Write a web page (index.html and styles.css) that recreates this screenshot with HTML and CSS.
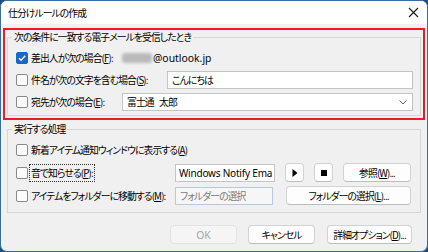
FILE: index.html
```html
<!DOCTYPE html>
<html lang="ja">
<head>
<meta charset="utf-8">
<title>仕分けルールの作成</title>
<link rel="stylesheet" href="styles.css">
</head>
<body>
<div class="window">
	<div class="titlebar">
		<span class="title">仕分けルールの作成</span>
		<svg class="close" width="11" height="11" viewBox="0 0 11 11"><path d="M1 1L10 10M10 1L1 10" stroke="#1a1a1a" stroke-width="1.1"/></svg>
	</div>
	<div class="content">
		<!--条件-->
		<div class="highlight">
			<fieldset class="group">
				<legend>次の条件に一致する電子メールを受信したとき</legend>
				<div class="row">
					<span class="check on"><svg width="10" height="10" viewBox="0 0 10 10"><path d="M2 5.2L4.1 7.3L8.2 2.8" fill="none" stroke="#fff" stroke-width="1.4"/></svg></span>
					<span class="label lbl-a">差出人が次の場合(<u>F</u>):</span>
					<span class="blur"></span><span class="latin">@outlook.jp</span>
				</div>
				<div class="row">
					<span class="check"></span>
					<span class="label lbl-b">件名が次の文字を含む場合(<u>S</u>):</span>
					<span class="field grow">こんにちは</span>
				</div>
				<div class="row">
					<span class="check"></span>
					<span class="label lbl-a">宛先が次の場合(<u>E</u>):</span>
					<span class="field grow combo"><span class="name">富士通 太郎</span><svg width="8" height="5" viewBox="0 0 8 5"><path d="M0.5 0.5L4 4L7.5 0.5" fill="none" stroke="#666" stroke-width="1"/></svg></span>
				</div>
			</fieldset>
		</div>
		<!--処理-->
		<fieldset class="group actions">
			<legend>実行する処理</legend>
			<div class="row">
				<span class="check"></span>
				<span class="label">新着アイテム通知ウィンドウに表示する(<u>A</u>)</span>
			</div>
			<div class="row">
				<span class="check"></span>
				<span class="label lbl-c"><span class="focus">音で知らせる(<u>P</u>):</span></span>
				<span class="field sound latin">Windows Notify Ema</span>
				<span class="btn small"><svg width="6" height="8" viewBox="0 0 6 8"><path d="M0.5 0L5.5 4L0.5 8Z" fill="#000"/></svg></span>
				<span class="btn small"><svg width="6" height="6" viewBox="0 0 6 6"><rect width="6" height="6" fill="#000"/></svg></span>
				<span class="btn browse">参照(<u>W</u>)...</span>
			</div>
			<div class="row">
				<span class="check"></span>
				<span class="label lbl-c">アイテムをフォルダーに移動する(<u>M</u>):</span>
				<span class="field folder">フォルダーの選択</span>
				<span class="btn pick">フォルダーの選択(<u>L</u>)...</span>
			</div>
		</fieldset>
		<div class="footer">
			<span class="btn ok disabled latin">OK</span>
			<span class="btn cancel">キャンセル</span>
			<span class="btn more">詳細オプション(<u>D</u>)...</span>
		</div>
	</div>
</div>
</body>
</html>
```

FILE: styles.css
```css
* {
	margin: 0;
	padding: 0;
	box-sizing: border-box;
}

html,
body {
	width: 428px;
	height: 252px;
	overflow: hidden;
	background: #1f4f80;
}

body {
	font-family: "Noto Sans CJK JP", sans-serif;
	font-size: 9.8px;
	letter-spacing: -0.9px;
	font-feature-settings: "palt";
	color: #000;
}

/* 英字だけは少し大きく */
.latin {
	font-family: "Noto Sans", "Noto Sans CJK JP", sans-serif;
	font-size: 10.4px;
	letter-spacing: 0;
}

.window {
	width: 428px;
	height: 252px;
	border: 1px solid #3a6ca0;
	border-radius: 7px;
	background: #f0f0f0;
	overflow: hidden;
}

.titlebar {
	height: 23px;
	background: #fff;
	display: flex;
	align-items: center;
	justify-content: space-between;
	padding: 0 8px 0 7px;
}

.content {
	padding-top: 4px;
}

/* 赤枠 */
.highlight {
	margin: 0 2px;
	border: 2px solid #ec1c24;
	padding: 1px 2px 2px;
}

.group {
	border: 1px solid #d6d6d6;
	padding: 4px 7px 2px 8px;
}

.group legend {
	margin-left: -4px;
	padding: 0 2px;
	line-height: 12px;
}

.actions {
	margin: 3px 6px 0;
	padding: 3px 7px 5px 8px;
}

.row {
	display: flex;
	align-items: center;
	height: 22px;
	white-space: nowrap;
}

.actions .row {
	height: 23px;
}

.check {
	flex: none;
	width: 12px;
	height: 12px;
	border: 1px solid #8a8a8a;
	border-radius: 2px;
	background: #fbfbfb;
	margin-right: 3px;
	display: flex;
	align-items: center;
	justify-content: center;
}

.check.on {
	background: #1a67c4;
	border-color: #1a67c4;
}

.label {
	flex: none;
}

.lbl-a {
	width: 91px;
}

.lbl-b {
	width: 136px;
}

.lbl-c {
	width: 144px;
}

.focus {
	outline: 1px dotted #333;
	outline-offset: 1px;
}

.blur {
	width: 30px;
	height: 10px;
	background: #b9b9b9;
	border-radius: 3px;
	filter: blur(1.5px);
	margin-right: 1px;
}

.field {
	height: 18px;
	border: 1px solid #c4c4c4;
	background: #fff;
	padding: 0 4px;
	display: flex;
	align-items: center;
	overflow: hidden;
	white-space: nowrap;
}

.grow {
	flex: 1;
}

.combo {
	justify-content: space-between;
	padding-right: 5px;
}

.name {
	word-spacing: 4px;
}

.sound {
	width: 100px;
	flex: none;
	padding: 0 1px 0 3px;
	font-size: 10px;
	letter-spacing: -0.2px;
}

.folder {
	width: 98px;
	flex: none;
	background: #f6f6f6;
	border-color: #b9c9dc;
	color: #7a7a7a;
}

.btn {
	height: 19px;
	border: 1px solid #d2d2d2;
	border-bottom-color: #bcbcbc;
	border-radius: 4px;
	background: #fdfdfd;
	display: flex;
	align-items: center;
	justify-content: center;
	flex: none;
	white-space: nowrap;
}

.small {
	width: 19px;
	margin-left: 10px;
}

.browse {
	width: 68px;
	margin-left: 10px;
}

.pick {
	width: 125px;
	margin-left: 13px;
}

.footer {
	display: flex;
	justify-content: flex-end;
	margin-top: 12px;
	padding-right: 15px;
}

.ok {
	width: 67px;
}

.cancel {
	width: 67px;
	margin-left: 11px;
}

.more {
	width: 85px;
	margin-left: 12px;
}

.disabled {
	background: #f5f5f5;
	border-color: #e2e2e2;
	color: #a6a6a6;
}
```
